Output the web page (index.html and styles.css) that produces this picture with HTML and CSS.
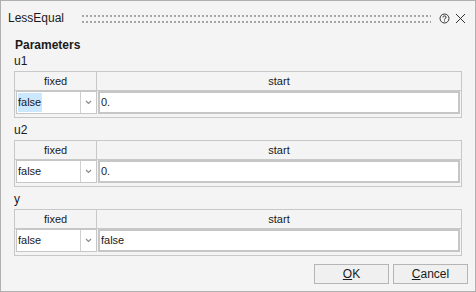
FILE: index.html
```html
<!doctype html>
<html>
	<head>
		<title>LessEqual</title>
		<meta charset="utf-8">
		<link rel="stylesheet" href="styles.css">
	</head>
	<body>
		<div class="dlg">
			<div class="titlebar">
				<span class="ttl">LessEqual</span>
				<div class="grip"></div>
				<svg class="ico" width="11" height="11" viewBox="0 0 11 11">
					<circle cx="5.5" cy="5.5" r="4.5" fill="none" stroke="#333" stroke-width="1"/>
					<path d="M3.9 4.4 Q3.9 2.9 5.5 2.9 Q7.1 2.9 7.1 4.2 Q7.1 5 6 5.5 Q5.5 5.8 5.5 6.6" fill="none" stroke="#333" stroke-width="1"/>
					<rect x="5" y="7.5" width="1" height="1" fill="#333"/>
				</svg>
				<svg class="ico x" width="11" height="11" viewBox="0 0 11 11">
					<path d="M1 1 L10 10 M10 1 L1 10" stroke="#333" stroke-width="1"/>
				</svg>
			</div>

			<div class="body">
				<div class="head">Parameters</div>

				<div class="grp">
					<div class="lbl">u1</div>
					<div class="grid">
						<div class="ghead"><div class="hc">fixed</div><div class="hc">start</div></div>
						<div class="grow">
							<div class="fx"><span class="val"><span class="sel">false</span></span><span class="arr"><svg width="7" height="5" viewBox="0 0 7 5"><path d="M1 1 L3.5 3.5 L6 1" fill="none" stroke="#8a8a8a" stroke-width="1.2"/></svg></span></div>
							<div class="st">0.</div>
						</div>
					</div>
				</div>

				<div class="grp">
					<div class="lbl">u2</div>
					<div class="grid">
						<div class="ghead"><div class="hc">fixed</div><div class="hc">start</div></div>
						<div class="grow">
							<div class="fx"><span class="val">false</span><span class="arr"><svg width="7" height="5" viewBox="0 0 7 5"><path d="M1 1 L3.5 3.5 L6 1" fill="none" stroke="#8a8a8a" stroke-width="1.2"/></svg></span></div>
							<div class="st">0.</div>
						</div>
					</div>
				</div>

				<div class="grp">
					<div class="lbl">y</div>
					<div class="grid">
						<div class="ghead"><div class="hc">fixed</div><div class="hc">start</div></div>
						<div class="grow">
							<div class="fx"><span class="val">false</span><span class="arr"><svg width="7" height="5" viewBox="0 0 7 5"><path d="M1 1 L3.5 3.5 L6 1" fill="none" stroke="#8a8a8a" stroke-width="1.2"/></svg></span></div>
							<div class="st">false</div>
						</div>
					</div>
				</div>
			</div>

			<div class="btns">
				<button class="btn"><u>O</u>K</button>
				<button class="btn"><u>C</u>ancel</button>
			</div>
		</div>
	</body>
</html>
```

FILE: styles.css
```css
body{
	margin:0px;
	padding:0px;
	font-family:"Liberation Sans", Arial, sans-serif;
	color:#1a1a1a;
}

/** dialog frame **/
.dlg{
	width:476px;
	height:292px;
	box-sizing:border-box;
	border:1px solid #b0b0b0;
	background:#f4f4f4;
	display:flex;
	flex-direction:column;
}

.titlebar{
	height:34px;
	display:flex;
	align-items:center;
	padding-left:7px;
	padding-right:9px;
}
.ttl{
	font-size:12px;
	width:72px;
}
.grip{
	flex:1;
	height:8px;
	margin-right:8px;
	margin-top:1px;
	/** 2x2 dots, 4px apart, two rows **/
	background:
		linear-gradient(90deg, #f4f4f4 2px, transparent 2px) 0 0 / 4px 6px,
		linear-gradient(#a6a6a6 2px, transparent 2px) 0 0 / 4px 6px;
}
.ico{
	display:block;
}
.ico.x{
	margin-left:5px;
}

/** parameters **/
.body{
	padding:0px 13px;
}
.head{
	font-weight:bold;
	font-size:12px;
	height:16px;
	line-height:16px;
	padding-left:1px;
	margin-top:2px;
}
.grp{
	margin-bottom:4px;
}
.lbl{
	font-size:12px;
	height:16px;
	line-height:16px;
	margin-bottom:2px;
}

.grid{
	border:1px solid #c8c8c8;
	height:47px;
	box-sizing:border-box;
	font-size:11px;
}
.ghead{
	display:flex;
	height:18px;
	border-bottom:1px solid #c8c8c8;
}
.hc{
	text-align:center;
	line-height:18px;
}
.hc:first-child{
	width:81px;
	border-right:1px solid #c8c8c8;
}
.hc:last-child{
	flex:1;
}

.grow{
	display:flex;
	height:23px;
	padding:0px 1px;
}
.fx{
	width:79px;
	border:1px solid #c6c6c6;
	background:#fff;
	display:flex;
}
.val{
	flex:1;
	line-height:21px;
	padding-left:1px;
}
.sel{
	background:#cce8ff;
	display:inline-block;
	line-height:19px;
	padding-right:1px;
}
.arr{
	width:15px;
	border-left:1px solid #d0d0d0;
	display:flex;
	align-items:center;
	justify-content:center;
}
.st{
	flex:1;
	margin-left:1px;
	border:2px solid #c6c6c6;
	background:#fff;
	line-height:19px;
	padding-left:1px;
}

/** buttons **/
.btns{
	margin-top:auto;
	display:flex;
	justify-content:flex-end;
	gap:4px;
	padding:0px 7px 7px 0px;
}
.btn{
	width:75px;
	height:20px;
	border:1px solid #b5b5b5;
	background:#f0f0f0;
	font-family:"Liberation Sans", Arial, sans-serif;
	font-size:12px;
	color:#1a1a1a;
	padding:0px;
}
```
